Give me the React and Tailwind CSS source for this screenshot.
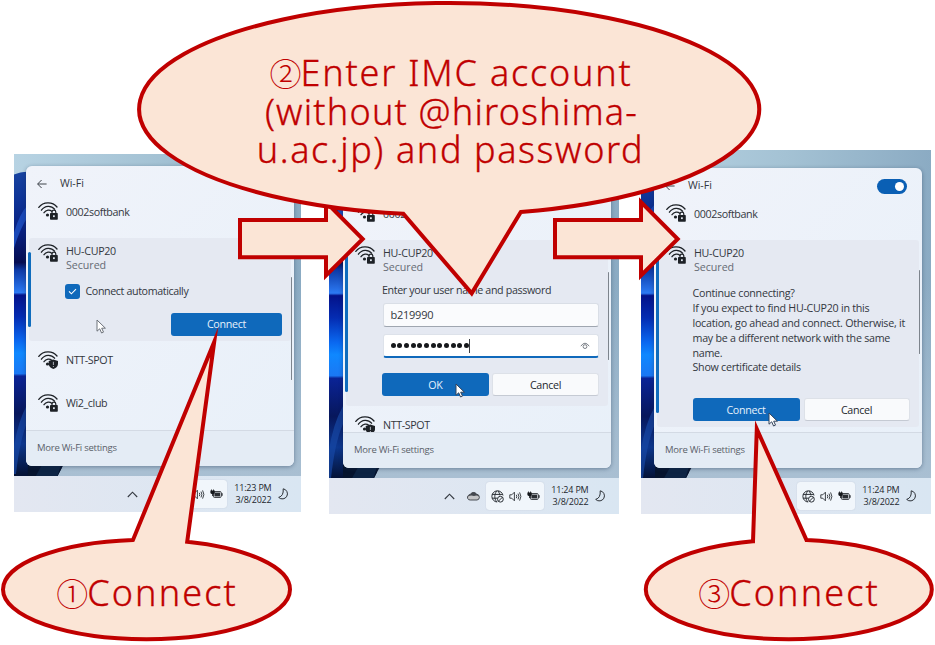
import React from "react";

const INK = "#1d2126";

function WifiIcon({ badge = "lock" }) {
  return (
    <svg width="21" height="19" viewBox="0 0 21 19" fill="none" className="shrink-0">
      <g stroke={INK} strokeWidth="1.3" strokeLinecap="round">
        <path d="M0.8 5.4 C5.2 -0.6 14.6 -0.6 19 5" />
        <path d="M3.4 8.2 C6.9 3.2 13.2 3.2 16.6 7.2" />
        <path d="M6 10.7 C8.2 7.5 11.8 7.5 13.8 9.2" />
      </g>
      <circle cx="9.5" cy="13" r="1.6" fill={INK} />
      {badge === "lock" ? (
        <g>
          <rect x="12" y="11" width="7.8" height="6.8" rx="0.8" fill={INK} />
          <path d="M14 11.2 V10 a1.9 1.9 0 0 1 3.8 0 V11.2" stroke={INK} strokeWidth="1.2" />
          <rect x="15" y="13.3" width="1.8" height="1.8" fill="#dfe5ee" />
        </g>
      ) : (
        <g>
          <path d="M15.3 8.4 L20 10 V13 c0 2.8 -2.4 4.2 -4.6 5 c-2.3 -0.8 -4.7 -2.2 -4.7 -5 V10 Z" fill={INK} />
          <path d="M15.4 10.8 v3.2 M15.4 15 v1" stroke="#aab0b8" strokeWidth="1" />
        </g>
      )}
    </svg>
  );
}

function Wallpaper({ id, dy }) {
  return (
    <svg className="absolute inset-0 h-full w-full" viewBox="0 0 290 328" preserveAspectRatio="none">
      <defs>
        <linearGradient id={id + "sky"} x1="0" x2="1" y1="0" y2="0">
          <stop offset="0" stopColor="#b7d3e3" />
          <stop offset="0.5" stopColor="#a4c2d4" />
          <stop offset="1" stopColor="#8babc3" />
        </linearGradient>
        <linearGradient id={id + "fog"} x1="0" x2="0" y1="0" y2="1">
          <stop offset="0.4" stopColor="#a9bfd2" stopOpacity="0" />
          <stop offset="1" stopColor="#a9bfd2" />
        </linearGradient>
        <linearGradient id={id + "bloom"} gradientUnits="userSpaceOnUse" x1="0" x2="0" y1="20" y2="328">
          <stop offset="0" stopColor="#1743a0" />
          <stop offset="0.1" stopColor="#0d3296" />
          <stop offset="0.2" stopColor="#082080" />
          <stop offset="0.3" stopColor="#050d52" />
          <stop offset="0.325" stopColor="#0d3aa6" />
          <stop offset="0.4" stopColor="#2c7af4" />
          <stop offset="0.408" stopColor="#04128a" />
          <stop offset="0.48" stopColor="#042cb2" />
          <stop offset="0.56" stopColor="#0a68f0" />
          <stop offset="0.6" stopColor="#0f88ff" />
          <stop offset="0.668" stopColor="#1a78f4" />
          <stop offset="0.676" stopColor="#0a2396" />
          <stop offset="0.8" stopColor="#07175c" />
          <stop offset="0.9" stopColor="#0c378f" />
          <stop offset="1" stopColor="#041236" />
        </linearGradient>
      </defs>
      <rect width="290" height="328" fill={"url(#" + id + "sky)"} />
      <rect width="290" height="328" fill={"url(#" + id + "fog)"} />
      <g transform={"translate(0 " + dy + ")"}>
        <path d="M0 23 Q6 20 14 20 L40 60 V300 L48 322 L44 330 H0 Z" fill={"url(#" + id + "bloom)"} />
        <path d="M0 82 Q6 62 14 54 V66 Q6 78 0 98 Z" fill="#1a48b8" />
        <path d="M0 300 Q4 274 14 256 V274 Q6 292 2 328 H0 Z" fill="#1747a4" opacity="0.7" />
        <path d="M14 309 H55 L44 330 H14 Z" fill="#06142e" />
        <path d="M22 330 L32 312 L50 310 L44 330 Z" fill="#0d2444" />
      </g>
    </svg>
  );
}

function Cursor({ soft }) {
  return (
    <svg width="11" height="15" viewBox="0 0 11 15">
      <path d="M1 1 V12.2 L3.7 9.8 L5.6 14 L7.5 13.1 L5.7 9.2 H9.4 Z" fill="#fff" stroke={soft ? "#6d727a" : "#33445c"} strokeWidth="1" />
    </svg>
  );
}

function Network({ name, badge, className = "" }) {
  return (
    <div className={"flex shrink-0 items-center pl-[12px] " + className}>
      <WifiIcon badge={badge} />
      <span className="ml-[7px] text-[10.7px] leading-[14px] tracking-[-0.38px]">{name}</span>
    </div>
  );
}

function Selected({ className = "", children }) {
  return (
    <div className={"relative mx-[3px] flex shrink-0 flex-col rounded-[3px] bg-[#e5e9f2] " + className}>
      <div className="absolute bottom-[14px] left-[-1px] top-[14px] w-[2.5px] rounded-full bg-[#0f6cbd]" />
      <div className="flex pl-[9px] pt-[6px]">
        <WifiIcon />
        <div className="ml-[7px] flex flex-col text-[10.7px] leading-[14.2px] tracking-[-0.3px]">
          <span>HU-CUP20</span>
          <span className="tracking-[-0.05px] text-[#666b74]">Secured</span>
        </div>
      </div>
      {children}
    </div>
  );
}

function Button({ primary, className = "", children }) {
  return (
    <div
      className={
        "flex h-[23px] items-center justify-center rounded-[3px] text-[10.7px] tracking-[-0.3px] " +
        (primary ? "bg-[#0f69bb] text-[#e6f1fb] " : "border border-[#dde1e8] border-b-[#c5cad3] bg-[#f9fafc] text-[#23272d] ") +
        className
      }
    >
      {children}
    </div>
  );
}

function Screen({ id, className, panelClass = "", desktopClass, dy, trayClass, time, showCloud, toggle, scrollClass, cursorClass, softCursor, children }) {
  return (
    <section className={"relative flex shrink-0 flex-col overflow-hidden " + className}>
      <div className={"relative shrink-0 " + desktopClass}>
        <Wallpaper id={id} dy={dy} />
        <div className={"relative flex h-[300px] w-[268px] flex-col overflow-hidden rounded-[6px] bg-gradient-to-br from-[#f0f3fa] to-[#e8f0f9] shadow-[0_1px_4px_rgba(20,40,70,0.4)] " + panelClass}>
          <header className="flex h-[36px] shrink-0 items-center pl-[11px] pr-[15px]">
            <svg width="10" height="10" viewBox="0 0 10 10" fill="none" stroke="#3d4249" strokeWidth="1">
              <path d="M9.6 5 H0.8 M4.6 1 L0.6 5 L4.6 9" />
            </svg>
            <span className="ml-[13px] text-[10.6px] tracking-[-0.05px]">Wi-Fi</span>
            {toggle && (
              <span className="ml-auto flex h-[15px] w-[30px] items-center justify-end rounded-full bg-[#0a5fb4] pr-[3px]">
                <span className="h-[9px] w-[9px] rounded-full bg-white" />
              </span>
            )}
          </header>
          <div className="flex h-[228px] shrink-0 flex-col overflow-hidden">
            <Network name="0002softbank" className="mb-[17px] h-[19px]" />
            {children}
          </div>
          <footer className="flex h-[36px] shrink-0 items-center border-t border-[#d3dae4] bg-[#e4ecf5] pb-px pl-[11px] text-[9.5px] tracking-[-0.25px] text-[#5a6069]">
            More Wi-Fi settings
          </footer>
          <div className={"absolute w-[1.5px] rounded-full bg-[#7d848d] " + scrollClass} />
        </div>
      </div>
      <div className={"flex h-[36px] shrink-0 items-center justify-end bg-gradient-to-r from-[#e3e7f1] to-[#d9e6f2] " + trayClass}>
        <svg width="11" height="7" viewBox="0 0 11 7" fill="none" stroke="#33383f" strokeWidth="1.1">
          <path d="M0.8 6 L5.5 1.2 L10.2 6" />
        </svg>
        <svg width="13" height="10" viewBox="0 0 13 10" className={"ml-[12px] mr-[6px] " + (showCloud ? "" : "invisible")}>
          <path d="M3.2 9 A2.6 2.6 0 0 1 1.2 4.6 Q2.2 3.4 3.4 3.4 A3.5 3.5 0 0 1 9.4 3 Q12.4 3.6 12.4 6.4 Q12.2 8.8 10 9 Z" fill="#c4c5c7" stroke="#3a3e45" strokeWidth="0.9" />
          <path d="M1 5.4 Q2 3.3 3.5 3.2 A3.4 3.4 0 0 1 9.5 3 Q11.4 3.4 12.2 5.6 Q9.8 3.8 7 5 Q4 3.8 1 5.4 Z" fill="#44484f" />
        </svg>
        <div className="flex h-[28px] w-[58px] items-center justify-center gap-[5px] rounded-[3px] bg-[#f1f6fb] shadow-[0_0_1px_rgba(90,110,140,0.35)]">
          <svg width="13" height="13" viewBox="0 0 13 13" fill="none" stroke="#2b3036" strokeWidth="1">
            <path d="M12 5.5 A5.6 5.6 0 1 0 6.2 12 M1 4.4 H11.6 M1 8.2 H6.4 M5.6 1.1 C3.2 4.6 3.2 8.4 5.6 11.8 M7.2 1.1 Q8.6 3 8.8 5.4" />
            <circle cx="9.4" cy="9.2" r="2.9" />
            <path d="M7.4 11.2 L11.4 7.2" />
          </svg>
          <svg width="13" height="11" viewBox="0 0 13 11" fill="none" stroke="#2b3036" strokeWidth="0.9">
            <path d="M0.8 3.8 H2.8 L5.4 1.2 V9.8 L2.8 7.2 H0.8 Z" />
            <path d="M7.3 3.8 q1 1.7 0 3.4 M9 2.6 q1.8 2.9 0 5.8 M10.6 1.4 q2.6 4.1 0 8.2" />
          </svg>
          <svg width="13" height="10" viewBox="0 0 13 10">
            <rect x="3.4" y="2.6" width="7.8" height="5.8" rx="1" fill="#f1f6fb" stroke="#1f2328" strokeWidth="0.9" />
            <rect x="4.4" y="3.6" width="5.6" height="3.8" fill="#2a2e33" />
            <rect x="11.4" y="4.2" width="1.2" height="2.6" fill="#1f2328" />
            <path d="M0.4 1.4 H4.8 V3.8 Q4.6 5 3.2 5 V7 H2.2 V5 Q0.6 5 0.4 3.8 Z M1.2 0.4 h0.8 v1.4 h-0.8 z M3.2 0.4 h0.8 v1.4 h-0.8 z" fill="#14171b" />
          </svg>
        </div>
        <div className="ml-[7px] flex w-[37.5px] flex-col items-end text-[9px] leading-[12px] tracking-[-0.2px] text-[#23272d]">
          <span className="whitespace-nowrap">{time}</span>
          <span className="whitespace-nowrap">3/8/2022</span>
        </div>
        <svg width="10" height="12" viewBox="0 0 10 12" fill="none" stroke="#2b3036" strokeWidth="1" className="ml-[6.5px] mr-px">
          <path d="M5.2 0.8 A5.1 5.1 0 1 1 0.7 9.4 Q5.8 8 5.2 0.8 Z" strokeLinejoin="round" />
        </svg>
      </div>
      <div className={"absolute " + cursorClass}>
        <Cursor soft={softCursor} />
      </div>
    </section>
  );
}

const callout = { fill: "#fbe5d6", stroke: "#c00000", strokeWidth: 4, strokeMiterlimit: 20 };

function Annotations() {
  return (
    <svg className="absolute left-0 top-0" width="935" height="645" viewBox="0 0 935 645">
      <path {...callout} d="M240 220 H326 V202 L362.7 239 L326 275.5 V257.3 H240 Z" />
      <path {...callout} d="M403.3 213.8 A310 106 0 1 1 520.7 212.1 L471.7 293.3 Z" />
      <path {...callout} d="M555 220 H641 V202 L677.7 239 L641 275.5 V257.3 H555 Z" />
      <path {...callout} d="M187.2 541.7 A143.5 49.8 0 0 1 290 589.5 A143.5 49.8 0 0 1 146.5 639.3 A143.5 49.8 0 0 1 3 589.5 A143.5 49.8 0 0 1 133 539.9 L214.2 342 Z" />
      <path {...callout} d="M806.5 540.1 A143 49.8 0 0 1 931.8 589.5 A143 49.8 0 0 1 788.8 639.3 A143 49.8 0 0 1 645.8 589.5 A143 49.8 0 0 1 753 541.3 L756.8 429 Z" />
    </svg>
  );
}

function Caption({ className, children }) {
  return (
    <div
      className={
        "absolute whitespace-nowrap text-center font-light text-[#c00000] [-webkit-text-stroke:0.35px_#c00000] [font-family:'Noto_Sans','Noto_Sans_CJK_JP',sans-serif] " +
        className
      }
    >
      {children}
    </div>
  );
}

function Num({ children }) {
  return <span className="text-[32px] leading-none tracking-[-1px] [-webkit-text-stroke:0px]">{children}</span>;
}

export default function App() {
  return (
    <main className="relative flex h-[645px] w-[935px] items-start overflow-hidden bg-white pl-[14px] pt-[150px] text-[#33373e] [font-family:'Open_Sans','Noto_Sans',sans-serif]">
      <Screen
        id="a"
        className="mt-[4px] h-[358px] w-[287px]"
        desktopClass="h-[322px] pl-[12px] pt-[12px]"
        dy={-2}
        time="11:23 PM"
        trayClass="pr-[12px]"
        scrollClass="right-[2px] top-[111px] h-[103px]"
        cursorClass="left-[82px] top-[165px]"
        softCursor
      >
        <Selected className="h-[103px]">
          <div className="mt-[12px] flex items-center pl-[36px]">
            <span className="flex h-[15px] w-[15px] items-center justify-center rounded-[3px] bg-[#0f69bb]">
              <svg width="9" height="7" viewBox="0 0 9 7" fill="none" stroke="#fff" strokeWidth="1.1">
                <path d="M1 3.4 L3.4 5.8 L8 1.2" />
              </svg>
            </span>
            <span className="ml-[5.5px] text-[10.7px] leading-[15px] tracking-[-0.38px]">Connect automatically</span>
          </div>
          <Button primary className="ml-[142px] mt-[13.5px] w-[111px]">Connect</Button>
        </Selected>
        <Network name="NTT-SPOT" badge="shield" className="mt-[9px] h-[20px]" />
        <Network name="Wi2_club" className="mt-[23px] h-[20px]" />
      </Screen>

      <Screen
        id="b"
        className="ml-[28px] h-[364px] w-[290px]"
        desktopClass="h-[328px] pl-[14px] pt-[18px]"
        dy={0}
        time="11:24 PM"
        trayClass="pr-[13px]"
        showCloud
        toggle
        scrollClass="right-[2px] top-[104px] h-[88px]"
        cursorClass="left-[126px] top-[233px]"
      >
        <Selected className="h-[166px]">
          <div className="mt-[8.5px] pl-[36px] text-[10.7px] leading-[15px] tracking-[-0.36px]">Enter your user name and password</div>
          <div className="ml-[36.5px] mt-[5.5px] flex h-[24px] w-[216px] items-center rounded-[3px] border border-[#d9dee6] border-b-[#9fa6b0] bg-[#fafbfd] pb-px pl-[7px] text-[11px] tracking-[-0.25px]">
            b219990
          </div>
          <div className="ml-[36.5px] mt-[7px] flex h-[24px] w-[216px] items-center rounded-[3px] border border-[#dde2ea] border-b-2 border-b-[#0f69bb] bg-white pl-[7px] pr-[8px]">
            <div className="flex gap-[1.7px]">
              {Array.from({ length: 12 }, (_, i) => (
                <span key={i} className="h-[5px] w-[5px] rounded-full bg-[#16181b]" />
              ))}
            </div>
            <span className="h-[14px] w-px bg-[#3b3f45]" />
            <svg width="10" height="8" viewBox="0 0 10 8" fill="none" stroke="#6d737b" strokeWidth="0.9" className="ml-auto">
              <path d="M0.8 4.2 Q5 -1.8 9.2 4.2" />
              <circle cx="5" cy="4.6" r="1.9" />
            </svg>
          </div>
          <div className="ml-[36px] mt-[15px] flex gap-[3px]">
            <Button primary className="w-[107px]">OK</Button>
            <Button className="w-[107px]">Cancel</Button>
          </div>
        </Selected>
        <Network name="NTT-SPOT" badge="shield" className="mt-[9px] h-[20px]" />
      </Screen>

      <Screen
        id="c"
        className="ml-[22px] h-[364px] w-[290px]"
        desktopClass="h-[328px] pl-[13px] pt-[18px]"
        dy={0}
        time="11:24 PM"
        trayClass="pr-[14px]"
        toggle
        scrollClass="right-[2px] top-[102px] h-[84px]"
        cursorClass="left-[127px] top-[262px]"
      >
        <Selected className="h-[187px]">
          <div className="mt-[12px] whitespace-nowrap pl-[35.5px] text-[10.7px] leading-[14.8px] tracking-[-0.26px]">
            <p>Continue connecting?</p>
            <p>If you expect to find HU-CUP20 in this</p>
            <p>location, go ahead and connect. Otherwise, it</p>
            <p>may be a different network with the same</p>
            <p>name.</p>
            <p>Show certificate details</p>
          </div>
          <div className="ml-[35.5px] mt-[23px] flex gap-[4px]">
            <Button primary className="w-[107px]">Connect</Button>
            <Button className="w-[106px]">Cancel</Button>
          </div>
        </Selected>
      </Screen>

      <Annotations />
      <Caption className="left-[256px] top-[54px] w-[390px] text-[36px] leading-[38.7px]">
        <div className="tracking-[1.8px]"><Num>②</Num>Enter IMC account</div>
        <div className="pl-px tracking-[1.2px]">(without @hiroshima-</div>
        <div className="pr-px tracking-[1.6px]">u.ac.jp) and password</div>
      </Caption>
      <Caption className="left-[47px] top-[573px] w-[200px] text-[36px] leading-[40px] tracking-[2.1px]"><Num>①</Num>Connect</Caption>
      <Caption className="left-[689px] top-[573px] w-[200px] text-[36px] leading-[40px] tracking-[2.1px]"><Num>③</Num>Connect</Caption>
    </main>
  );
}
